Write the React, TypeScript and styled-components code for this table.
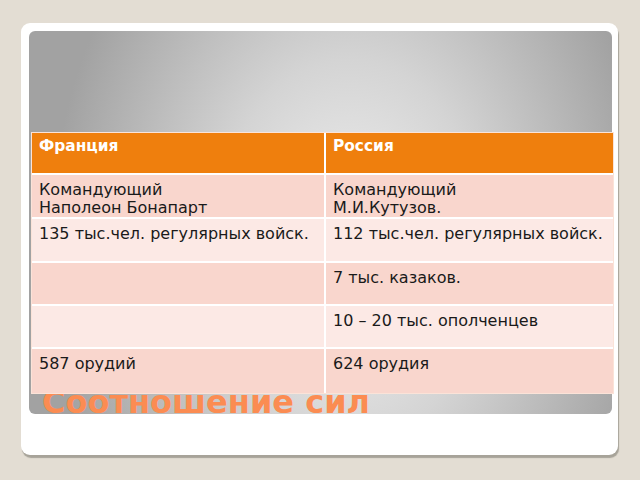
import React from "react";
import styled, { createGlobalStyle } from "styled-components";

const GlobalStyle = createGlobalStyle`
  html, body {
    margin: 0;
    padding: 0;
    background: #e3ddd3;
    font-family: "DejaVu Sans", "Noto Sans", sans-serif;
  }
  #root {
    width: 640px;
    height: 480px;
    overflow: hidden;
  }
`;

const Page = styled.div`
  width: 640px;
  height: 480px;
  padding: 23px 0 0 21px;
  box-sizing: border-box;
`;

const Card = styled.div`
  width: 597px;
  height: 432px;
  box-sizing: border-box;
  padding: 8px 0 0 8px;
  background: #ffffff;
  border-radius: 9px;
  box-shadow: 1px 3px 1px #a7a399;
`;

const Panel = styled.div`
  width: 583px;
  height: 383px;
  border-radius: 6px;
  display: grid;
  grid-template-areas: "stack";
  background: radial-gradient(
    ellipse 300px 430px at 55% 58%,
    #f2f2f2 0%,
    #d4d4d4 45%,
    #a2a2a2 100%
  );
`;

const Title = styled.h1`
  grid-area: stack;
  align-self: end;
  margin: 0 0 -4px 13px;
  font-family: "DejaVu Sans", sans-serif;
  font-weight: bold;
  font-size: 32px;
  line-height: 32px;
  color: #fb8c52;
  white-space: nowrap;
`;

const Table = styled.table`
  grid-area: stack;
  align-self: start;
  margin: 101px 0 0 2px;
  width: 583px;
  border-collapse: separate;
  border-spacing: 0;
  border: 1px solid #fbe3d8;
  table-layout: fixed;
`;

const Row = styled.tr<{ $h: number }>`
  height: ${(p) => p.$h}px;
`;

const Cell = styled.td<{ $tone: "head" | "dark" | "light"; $last?: boolean; $bottom?: boolean }>`
  vertical-align: top;
  padding: ${(p) => (p.$tone === "head" ? "4px" : "6px")} 7px 0 7px;
  box-sizing: border-box;
  font-family: "DejaVu Sans", sans-serif;
  font-size: ${(p) => (p.$tone === "head" ? "15.4px" : "16px")};
  line-height: 18px;
  color: ${(p) => (p.$tone === "head" ? "#ffffff" : "#1a1a1a")};
  font-weight: ${(p) => (p.$tone === "head" ? "bold" : "normal")};
  background: ${(p) =>
    p.$tone === "head" ? "#ef7f0d" : p.$tone === "dark" ? "#f9d6cd" : "#fce9e5"};
  border-right: ${(p) => (p.$last ? "0" : "2px solid #ffffff")};
  border-bottom: ${(p) => (p.$bottom ? "0" : "2px solid #ffffff")};
`;

type RowData = { left: string[]; right: string[]; h: number };

const rows: RowData[] = [
  { left: ["Командующий", "Наполеон Бонапарт"], right: ["Командующий", "М.И.Кутузов."], h: 44 },
  { left: ["135 тыс.чел. регулярных войск."], right: ["112 тыс.чел. регулярных войск."], h: 44 },
  { left: [], right: ["7 тыс. казаков."], h: 43 },
  { left: [], right: ["10 – 20 тыс. ополченцев"], h: 43 },
  { left: ["587 орудий"], right: ["624 орудия"], h: 44 },
];

const Lines = ({ lines }: { lines: string[] }) => (
  <>
    {lines.map((l, i) => (
      <React.Fragment key={i}>
        {i > 0 && <br />}
        {l}
      </React.Fragment>
    ))}
  </>
);

export default function App() {
  return (
    <>
      <GlobalStyle />
      <Page>
        <Card>
          <Panel>
            <Title>Соотношение сил</Title>
            <Table>
              <colgroup>
                <col style={{ width: "294px" }} />
                <col />
              </colgroup>
              <tbody>
                <Row $h={42}>
                  <Cell $tone="head">Франция</Cell>
                  <Cell $tone="head" $last>
                    Россия
                  </Cell>
                </Row>
                {rows.map((r, i) => {
                  const tone = i % 2 === 0 ? "dark" : "light";
                  const bottom = i === rows.length - 1;
                  return (
                    <Row $h={r.h} key={i}>
                      <Cell $tone={tone} $bottom={bottom}>
                        <Lines lines={r.left} />
                      </Cell>
                      <Cell $tone={tone} $last $bottom={bottom}>
                        <Lines lines={r.right} />
                      </Cell>
                    </Row>
                  );
                })}
              </tbody>
            </Table>
          </Panel>
        </Card>
      </Page>
    </>
  );
}
